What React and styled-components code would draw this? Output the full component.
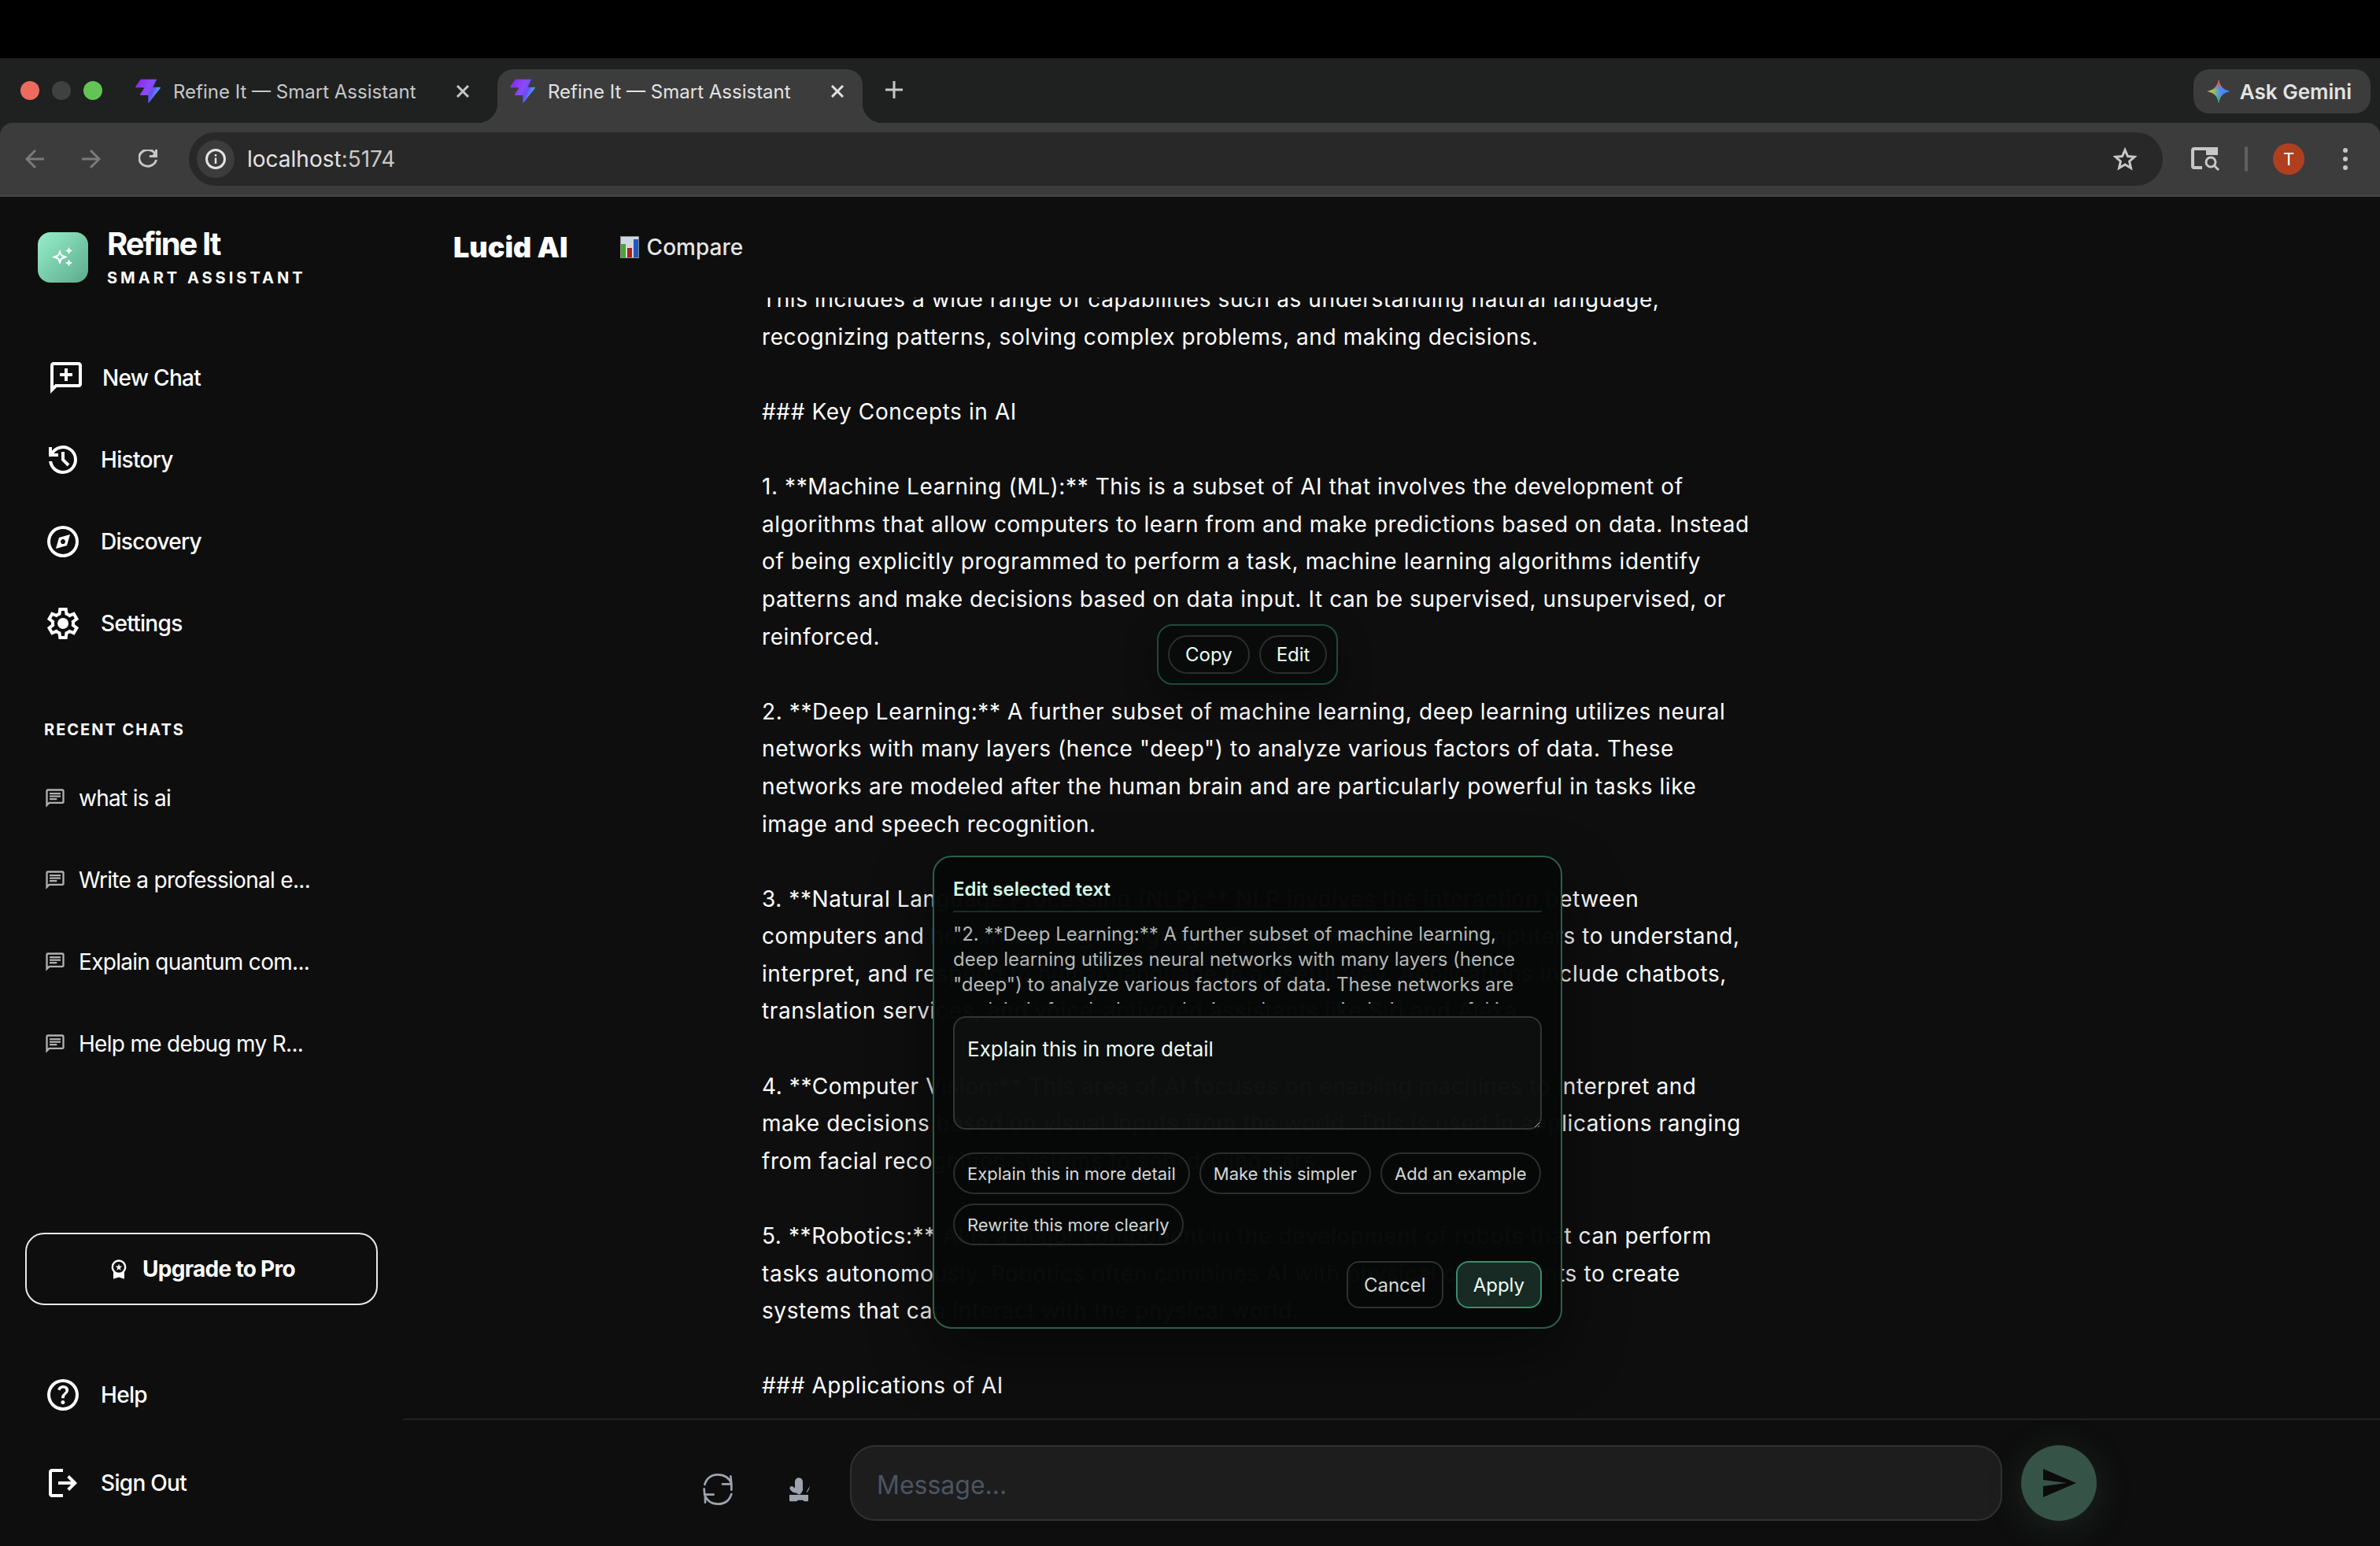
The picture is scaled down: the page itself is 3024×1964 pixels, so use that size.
import React, { useState } from "react";
import styled, { createGlobalStyle, css } from "styled-components";

const answer = `This includes a wide range of capabilities such as understanding natural language, recognizing patterns, solving complex problems, and making decisions.

### Key Concepts in AI

1. **Machine Learning (ML):** This is a subset of AI that involves the development of algorithms that allow computers to learn from and make predictions based on data. Instead of being explicitly programmed to perform a task, machine learning algorithms identify patterns and make decisions based on data input. It can be supervised, unsupervised, or reinforced.

2. **Deep Learning:** A further subset of machine learning, deep learning utilizes neural networks with many layers (hence "deep") to analyze various factors of data. These networks are modeled after the human brain and are particularly powerful in tasks like image and speech recognition.

3. **Natural Language Processing (NLP):** NLP involves the interaction between computers and humans through language. The goal is to enable computers to understand, interpret, and respond to human language in a useful way. Applications include chatbots, translation services, and voice-activated assistants like Siri and Alexa.

4. **Computer Vision:** This area of AI focuses on enabling machines to interpret and make decisions based on visual inputs from the world. This is used in applications ranging from facial recognition systems to self-driving cars.

5. **Robotics:** AI is a major component in the development of robots that can perform tasks autonomously. Robotics often combines AI with physical components to create systems that can interact with the physical world.

### Applications of AI`;

const selected = `"2. **Deep Learning:** A further subset of machine learning, deep learning utilizes neural networks with many layers (hence "deep") to analyze various factors of data. These networks are modeled after the human brain and are particularly powerful in tasks like image and speech recognition."`;

const recentChats = ["what is ai", "Write a professional e...", "Explain quantum com...", "Help me debug my R..."];

const suggestions = [
  "Explain this in more detail",
  "Make this simpler",
  "Add an example",
  "Rewrite this more clearly",
];

const ring =
  "M480-80q-83 0-156-31.5T197-197q-54-54-85.5-127T80-480q0-83 31.5-156T197-763q54-54 127-85.5T480-880q83 0 156 31.5T763-763q54 54 85.5 127T880-480q0 83-31.5 156T763-197q-54 54-127 85.5T480-80Zm0-80q134 0 227-93t93-227q0-134-93-227t-227-93q-134 0-227 93t-93 227q0 134 93 227t227 93Z";
const bubble =
  "M80-80v-720q0-33 23.5-56.5T160-880h640q33 0 56.5 23.5T880-800v480q0 33-23.5 56.5T800-240H240L80-80Zm126-240h594v-480H160v525l46-45Z";

const symbols = {
  newChat: bubble + "M440-400h80v-120h120v-80H520v-120h-80v120H320v80h120v120Z",
  history:
    "M480-120q-138 0-240.5-91.5T122-440h82q14 104 92.5 172T480-200q117 0 198.5-81.5T760-480q0-117-81.5-198.5T480-760q-69 0-129 32t-101 88h110v80H120v-240h80v94q51-64 124.5-99T480-840q75 0 140.5 28.5t114 77q48.5 48.5 77 114T840-480q0 75-28.5 140.5t-77 114q-48.5 48.5-114 77T480-120Zm112-192L440-464v-216h80v184l128 128-56 56Z",
  discovery:
    ring +
    "m-180-140 280-80 80-280-280 80-80 280Zm180-120q-25 0-42.5-17.5T420-480q0-25 17.5-42.5T480-540q25 0 42.5 17.5T540-480q0 25-17.5 42.5T480-420Z",
  settings:
    "m370-80-16-128q-13-5-24.5-12T307-235l-119 50L78-375l103-78q-1-7-1-13.5v-27q0-6.5 1-13.5L78-585l110-190 119 50q11-8 23-15t24-12l16-128h220l16 128q13 5 24.5 12t22.5 15l119-50 110 190-103 78q1 7 1 13.5v27q0 6.5-2 13.5l103 78-110 190-118-50q-11 8-23 15t-24 12L590-80H370Zm70-80h79l14-106q31-8 57.5-23.5T639-327l99 41 39-68-86-65q5-14 7-29.5t2-31.5q0-16-2-31.5t-7-29.5l86-65-39-68-99 42q-22-23-48.5-38.5T533-694l-13-106h-79l-14 106q-31 8-57.5 23.5T321-633l-99-41-39 68 86 64q-5 15-7 30t-2 32q0 16 2 31t7 30l-86 65 39 68 99-42q22 23 48.5 38.5T427-266l13 106Zm42-180q58 0 99-41t41-99q0-58-41-99t-99-41q-59 0-99.5 41T342-480q0 58 40.5 99t99.5 41Z",
  help:
    ring +
    "M478-240q21 0 35.5-14.5T528-290q0-21-14.5-35.5T478-340q-21 0-35.5 14.5T428-290q0 21 14.5 35.5T478-240Zm-36-154h74q0-33 7.5-52t42.5-52q26-26 41-49.5t15-56.5q0-56-41-86t-97-30q-57 0-92.5 30T342-618l66 26q5-18 22.5-39t53.5-21q32 0 48 17.5t16 38.5q0 20-12 37.5T506-526q-44 39-54 59t-10 73Z",
  signOut:
    "M200-120q-33 0-56.5-23.5T120-200v-560q0-33 23.5-56.5T200-840h280v80H200v560h280v80H200Zm440-160-55-58 102-102H360v-80h327L585-622l55-58 200 200-200 200Z",
  chat: bubble + "M240-400h320v-80H240v80Zm0-120h480v-80H240v80Zm0-120h480v-80H240v80Z",
  premium:
    "m387-412 35-114-92-74h114l36-112 36 112h114l-93 74 35 114-92-71-93 71ZM240-40v-309q-38-42-59-96t-21-115q0-134 93-227t227-93q134 0 227 93t93 227q0 61-21 115t-59 96v309l-240-80-240 80Zm240-280q100 0 170-70t70-170q0-100-70-170t-170-70q-100 0-170 70t-70 170q0 100 70 170t170 70Z",
};

function Symbol({ name, size = 48 }) {
  return (
    <svg width={size} height={size} viewBox="0 -960 960 960" fill="currentColor" aria-hidden="true">
      <path d={symbols[name]} />
    </svg>
  );
}

function Favicon({ id }) {
  return (
    <svg width="32" height="32" viewBox="0 0 96 96" aria-hidden="true">
      <defs>
        <linearGradient id={id} x1="0.1" y1="0.2" x2="0.9" y2="0.55">
          <stop offset="0" stopColor="#8a2cf0" />
          <stop offset="0.5" stopColor="#8b4bfa" />
          <stop offset="0.75" stopColor="#6a4cf8" />
          <stop offset="1" stopColor="#4aa4ff" />
        </linearGradient>
      </defs>
      <path
        d="M22 2H82L67 32H94Q97 33 95 36L52 91Q49 94 49 90V63H20Q16 62 19 58L33 37Q33 34 30 34H3Q-1 33 1 30L18 5Q20 2 22 2Z"
        fill={`url(#${id})`}
      />
    </svg>
  );
}

function Close() {
  return (
    <svg width="16" height="16" viewBox="0 0 16 16" stroke="currentColor" strokeWidth="3" aria-hidden="true">
      <path d="M1 1L15 15M15 1L1 15" />
    </svg>
  );
}

function BrowserBar() {
  return (
    <header>
      <TabStrip>
        <Lights>
          <Light $color="#ed6a5f" />
          <Light $color="#3f4140" />
          <Light $color="#61c454" />
        </Lights>
        <Tab>
          <Favicon id="boltA" />
          <TabTitle>Refine It — Smart Assistant</TabTitle>
          <TabButton aria-label="Close tab"><Close /></TabButton>
        </Tab>
        <Tab $active>
          <Favicon id="boltB" />
          <TabTitle>Refine It — Smart Assistant</TabTitle>
          <TabButton aria-label="Close tab"><Close /></TabButton>
        </Tab>
        <NewTab aria-label="New tab">
          <svg width="22" height="22" viewBox="0 0 22 22" stroke="currentColor" strokeWidth="3">
            <path d="M11 0V22M0 11H22" />
          </svg>
        </NewTab>
        <Gemini>
          <svg width="30" height="30" viewBox="0 0 30 30" aria-hidden="true">
            <defs>
              <linearGradient id="gemA" x1="0" y1="0.5" x2="0.6" y2="0.5">
                <stop offset="0" stopColor="#fbc02d" />
                <stop offset="0.5" stopColor="#8fbf6a" />
                <stop offset="1" stopColor="#4a86ff" />
              </linearGradient>
              <linearGradient id="gemB" x1="0.5" y1="0" x2="0.5" y2="1">
                <stop offset="0" stopColor="#f04a45" />
                <stop offset="0.22" stopColor="#e0605a" />
                <stop offset="0.45" stopColor="#4a86ff" stopOpacity="0" />
                <stop offset="0.65" stopColor="#34a87a" stopOpacity="0" />
                <stop offset="0.85" stopColor="#3fb56a" />
              </linearGradient>
            </defs>
            <path d="M15 0Q17 13 30 15Q17 17 15 30Q13 17 0 15Q13 13 15 0Z" fill="url(#gemA)" />
            <path d="M15 0Q17 13 30 15Q17 17 15 30Q13 17 0 15Q13 13 15 0Z" fill="url(#gemB)" />
          </svg>
          Ask Gemini
        </Gemini>
      </TabStrip>
      <ToolbarBack>
        <Toolbar>
          <NavButtons>
            <ChromeButton $dim aria-label="Back">
              <svg width="24" height="24" viewBox="0 0 24 24" fill="none" stroke="currentColor" strokeWidth="3">
                <path d="M24 12H2M13 1L2 12L13 23" />
              </svg>
            </ChromeButton>
            <ChromeButton $dim aria-label="Forward">
              <svg width="24" height="24" viewBox="0 0 24 24" fill="none" stroke="currentColor" strokeWidth="3">
                <path d="M0 12H22M11 1L22 12L11 23" />
              </svg>
            </ChromeButton>
            <ChromeButton aria-label="Reload">
              <svg width="24" height="24" viewBox="0 0 24 24" fill="none" stroke="currentColor" strokeWidth="3">
                <path d="M21 5A11 10.5 0 1 0 22.5 13" />
                <path d="M22.5 0V8.5H14" />
                <path d="M17 8L22 3V8Z" fill="currentColor" strokeWidth="1" />
              </svg>
            </ChromeButton>
          </NavButtons>
          <Omnibox>
            <SiteInfo aria-label="Site information">
              <svg width="26" height="26" viewBox="0 0 26 26" fill="none" stroke="currentColor" strokeWidth="3">
                <circle cx="13" cy="13" r="11.5" />
                <path d="M13 11.5V19M13 7V9.5" strokeWidth="2.5" />
              </svg>
            </SiteInfo>
            <Address>localhost<span>:5174</span></Address>
            <ChromeButton aria-label="Bookmark">
              <svg width="30" height="30" viewBox="0 0 30 30" fill="none" stroke="currentColor" strokeWidth="3">
                <path d="M15 3.5L18.5 11.5L27 12.3L20.6 18L22.5 26.5L15 22L7.5 26.5L9.4 18L3 12.3L11.5 11.5Z" />
              </svg>
            </ChromeButton>
          </Omnibox>
          <ToolbarEnd>
            <ChromeButton aria-label="Search tabs">
              <svg width="36" height="30" viewBox="0 0 36 30" fill="none" stroke="currentColor" strokeWidth="4">
                <path d="M14 26H4Q2 26 2 24V4Q2 2 4 2H32V8H19" />
                <path d="M19 2H32Q34 2 34 4V10H19Z" fill="currentColor" stroke="none" />
                <circle cx="25" cy="19" r="6" strokeWidth="3" />
                <path d="M29 23L35 29" strokeWidth="3" />
              </svg>
            </ChromeButton>
            <Divider />
            <Avatar>T</Avatar>
            <ChromeButton aria-label="Menu">
              <svg width="6" height="28" viewBox="0 0 6 28" fill="currentColor">
                <circle cx="3" cy="3" r="3" />
                <circle cx="3" cy="14" r="3" />
                <circle cx="3" cy="25" r="3" />
              </svg>
            </ChromeButton>
          </ToolbarEnd>
        </Toolbar>
      </ToolbarBack>
    </header>
  );
}

function Sidebar() {
  return (
    <Side>
      <Brand>
        <Logo>
          <svg width="28" height="28" viewBox="0 0 28 28" fill="#fff" aria-hidden="true">
            <path
              fillRule="evenodd"
              d="M10 4L12.6 10.4L20 13.5L12.6 16.6L10 23L7.4 16.6L0 13.5L7.4 10.4ZM10 9.5L8.7 12.2L6 13.5L8.7 14.8L10 17.5L11.3 14.8L14 13.5L11.3 12.2Z"
            />
            <path d="M21.5 1L22.9 4.1L26 5.5L22.9 6.9L21.5 10L20.1 6.9L17 5.5L20.1 4.1Z" />
            <path d="M21.5 16.5L22.9 19.6L26 21L22.9 22.4L21.5 25.5L20.1 22.4L17 21L20.1 19.6Z" />
          </svg>
        </Logo>
        <div>
          <BrandName>Refine It</BrandName>
          <BrandTag>SMART ASSISTANT</BrandTag>
        </div>
      </Brand>
      <Nav>
        <NavItem $primary><Symbol name="newChat" />New Chat</NavItem>
        <NavItem><Symbol name="history" />History</NavItem>
        <NavItem><Symbol name="discovery" />Discovery</NavItem>
        <NavItem><Symbol name="settings" />Settings</NavItem>
      </Nav>
      <SectionTitle>RECENT CHATS</SectionTitle>
      <Nav>
        {recentChats.map((chat) => (
          <ChatItem key={chat}>
            <Symbol name="chat" size={28} />
            <span>{chat}</span>
          </ChatItem>
        ))}
      </Nav>
      <SideFooter>
        <Upgrade><Symbol name="premium" size={28} />Upgrade to Pro</Upgrade>
        <Account>
          <NavItem><Symbol name="help" />Help</NavItem>
          <NavItem><Symbol name="signOut" />Sign Out</NavItem>
        </Account>
      </SideFooter>
    </Side>
  );
}

function EditDialog() {
  const [prompt, setPrompt] = useState(suggestions[0]);

  return (
    <Dialog role="dialog" aria-labelledby="edit-title">
      <DialogTitle id="edit-title">Edit selected text</DialogTitle>
      <Preview>{selected}</Preview>
      <Prompt aria-label="Instruction" value={prompt} onChange={(e) => setPrompt(e.target.value)} />
      <Chips>
        {suggestions.map((text) => (
          <Chip key={text} onClick={() => setPrompt(text)}>{text}</Chip>
        ))}
      </Chips>
      <Actions>
        <ActionButton>Cancel</ActionButton>
        <ActionButton $primary>Apply</ActionButton>
      </Actions>
    </Dialog>
  );
}

function Composer() {
  return (
    <ComposerBar>
      <ComposerRow>
        <ToolButton aria-label="Regenerate">
          <svg width="40" height="40" viewBox="66 156 120 120" fill="none" stroke="currentColor" strokeWidth="8" strokeLinecap="round">
            <path d="M76 198C84 172 104 160 126 160C150 160 169 172 178 194V218M175 166L178 196H144" />
            <path d="M178 234C170 260 150 272 126 272C103 272 86 262 76 238L74 214M78 266V236H110" />
          </svg>
        </ToolButton>
        <ToolButton aria-label="Voice input">
          <svg width="30" height="33" viewBox="396 167 90 99" fill="currentColor">
            <rect x="423" y="171" width="30" height="60" rx="15" />
            <path d="M403 212A8 8 0 0 1 417 206L430 216V230Q410 228 403 212Z" />
            <path d="M428 229H450L438 235Z" />
            <path d="M480 202L467 225L470 226Q478 216 480 202Z" />
            <path d="M402 236H474V257Q474 261 470 261H460Q456 261 454 256H434Q432 261 428 261H406Q402 261 402 257Z" />
          </svg>
        </ToolButton>
        <MessageInput placeholder="Message..." aria-label="Message" />
        <Send aria-label="Send">
          <svg width="48" height="48" viewBox="0 0 24 24" fill="currentColor">
            <path d="M2.01 21L23 12 2.01 3 2 10l15 2-15 2z" />
          </svg>
        </Send>
      </ComposerRow>
    </ComposerBar>
  );
}

function App() {
  return (
    <>
      <GlobalStyle />
      <Screen>
        <BrowserBar />
        <Body>
          <Sidebar />
          <Main>
            <TopBar>
              <h1>Lucid AI</h1>
              <Compare href="#compare">
                <svg width="24" height="28" viewBox="0 0 24 28" aria-hidden="true">
                  <path d="M0 0H24V28H0Z" fill="#8b9096" />
                  <path d="M1 1H23V27H1Z" fill="#cfd8e2" />
                  <path d="M1 10H7V27H1Z" fill="#4aa52e" />
                  <path d="M9 15H15V27H9Z" fill="#a8231a" />
                  <path d="M17 4H23V27H17Z" fill="#2456b8" />
                </svg>
                Compare
              </Compare>
            </TopBar>
            <Messages>
              <Thread>
                <Message>{answer}</Message>
              </Thread>
              <SelectionMenu>
                <MenuButton>Copy</MenuButton>
                <MenuButton>Edit</MenuButton>
              </SelectionMenu>
              <EditDialog />
            </Messages>
            <Composer />
          </Main>
        </Body>
      </Screen>
    </>
  );
}

export default App;

const GlobalStyle = createGlobalStyle`
  * {
    box-sizing: border-box;
    margin: 0;
    padding: 0;
  }
  body {
    background: #000;
    color: #fff;
    font-family: Inter, "Liberation Sans", sans-serif;
  }
  button {
    border: none;
    background: none;
    color: inherit;
    font: inherit;
    cursor: pointer;
  }
  svg {
    display: block;
    flex-shrink: 0;
  }
`;

const Screen = styled.div`
  display: flex;
  flex-direction: column;
  height: 100vh;
  padding-top: 74px;
`;

/* browser */

const TabStrip = styled.div`
  display: flex;
  align-items: flex-end;
  height: 82px;
  padding: 0 12px 0 26px;
  background: #1f2120;
`;

const Lights = styled.div`
  display: flex;
  gap: 16px;
  padding: 0 26px 29px 0;
`;

const Light = styled.span`
  width: 24px;
  height: 24px;
  border-radius: 50%;
  background: ${({ $color }) => $color};
`;

const Tab = styled.div`
  position: relative;
  display: flex;
  align-items: center;
  gap: 16px;
  width: 464px;
  height: 68px;
  margin-right: 12px;
  padding: 0 16px 12px;
  color: #c7c7c7;
  ${({ $active }) =>
    $active &&
    css`
      border-radius: 20px 20px 0 0;
      background: #3c3c3c;
      color: #e3e3e3;
      /* flared feet of the active tab */
      &::before,
      &::after {
        content: "";
        position: absolute;
        bottom: 0;
        width: 24px;
        height: 24px;
      }
      &::before {
        right: 100%;
        background: radial-gradient(circle at 0 0, transparent 24px, #3c3c3c 24px);
      }
      &::after {
        left: 100%;
        background: radial-gradient(circle at 100% 0, transparent 24px, #3c3c3c 24px);
      }
    `}
`;

const TabTitle = styled.span`
  flex: 1;
  font-size: 24px;
  white-space: nowrap;
`;

const TabButton = styled.button`
  padding: 8px;
`;

const NewTab = styled.button`
  margin: 0 auto 31px 17px;
  color: #c7c7c7;
`;

const Gemini = styled.button`
  display: flex;
  align-items: center;
  gap: 12px;
  height: 56px;
  margin-bottom: 12px;
  padding: 0 24px 0 17px;
  border-radius: 20px;
  background: #3c3c3c;
  color: #e3e3e3;
  font-size: 26px;
  font-weight: 600;
`;

const ToolbarBack = styled.div`
  background: #1f2120;
`;

const Toolbar = styled.div`
  display: flex;
  align-items: center;
  height: 94px;
  padding: 0 41px 0 32px;
  border-bottom: 2px solid #464646;
  border-radius: 16px 16px 0 0;
  background: #3c3c3c;
`;

const NavButtons = styled.div`
  display: flex;
  gap: 48px;
  margin-right: 40px;
`;

const ChromeButton = styled.button`
  color: ${({ $dim }) => ($dim ? "#7b7b7b" : "#c7c7c7")};
`;

const Omnibox = styled.div`
  display: flex;
  flex: 1;
  align-items: center;
  gap: 16px;
  height: 68px;
  padding: 0 33px 0 10px;
  border-radius: 34px;
  background: #282828;
`;

const SiteInfo = styled.button`
  display: grid;
  place-items: center;
  width: 48px;
  height: 48px;
  border-radius: 50%;
  background: #3c3c3c;
  color: #e3e3e3;
`;

const Address = styled.span`
  flex: 1;
  color: #e3e3e3;
  font-size: 28px;
  span {
    color: #c7c7c7;
  }
`;

const ToolbarEnd = styled.div`
  display: flex;
  align-items: center;
  gap: 32px;
  padding-left: 36px;
`;

const Divider = styled.span`
  width: 4px;
  height: 32px;
  border-radius: 2px;
  background: #5f5f5f;
`;

const Avatar = styled.span`
  display: grid;
  place-items: center;
  width: 40px;
  height: 40px;
  margin-right: 17px;
  border-radius: 50%;
  background: #b03f20;
  font-size: 22px;
`;

/* app */

const Body = styled.div`
  display: flex;
  flex: 1;
  min-height: 0;
  background: #0e0e0e;
`;

const Side = styled.aside`
  display: flex;
  flex-direction: column;
  width: 512px;
  padding: 34px 32px 36px;
`;

const Brand = styled.div`
  display: flex;
  align-items: center;
  gap: 24px;
  margin-bottom: 66px;
  padding-left: 16px;
`;

const Logo = styled.div`
  display: grid;
  place-items: center;
  width: 64px;
  height: 64px;
  border-radius: 16px;
  background: linear-gradient(135deg, #97eec9, #5bab8d);
`;

const BrandName = styled.div`
  font-size: 40px;
  font-weight: 700;
  line-height: 52px;
  letter-spacing: -2px;
`;

const BrandTag = styled.div`
  font-size: 20px;
  font-weight: 700;
  line-height: 34px;
  letter-spacing: 4px;
`;

const Nav = styled.nav`
  display: flex;
  flex-direction: column;
  gap: 16px;
`;

const NavItem = styled.button`
  display: flex;
  align-items: center;
  gap: ${({ $primary }) => ($primary ? "22px" : "24px")};
  height: 88px;
  padding: 0 ${({ $primary }) => ($primary ? "28px" : "24px")};
  font-size: 28px;
  font-weight: 500;
  letter-spacing: -0.025em;
`;

const SectionTitle = styled.h2`
  margin: 76px 0 28px;
  padding-left: 24px;
  font-size: 20px;
  font-weight: 700;
  line-height: 30px;
  letter-spacing: 2px;
`;

const ChatItem = styled.button`
  display: flex;
  align-items: center;
  gap: 16px;
  height: 88px;
  padding: 0 24px;
  font-size: 28px;
  letter-spacing: -0.025em;
  svg {
    color: #b0b0b0;
  }
`;

const SideFooter = styled.div`
  margin-top: auto;
`;

const Upgrade = styled.button`
  display: flex;
  align-items: center;
  justify-content: center;
  gap: 16px;
  width: 100%;
  height: 92px;
  border: 2px solid #e8e8e8;
  border-radius: 24px;
  font-size: 28px;
  font-weight: 700;
  letter-spacing: -0.025em;
`;

const Account = styled.div`
  display: flex;
  flex-direction: column;
  gap: 24px;
  margin-top: 70px;
`;

const Main = styled.main`
  display: flex;
  flex: 1;
  flex-direction: column;
  min-width: 0;
`;

const TopBar = styled.div`
  display: flex;
  align-items: center;
  gap: 66px;
  height: 128px;
  padding: 0 64px;
  h1 {
    font-size: 36px;
    font-weight: 900;
  }
`;

const Compare = styled.a`
  display: flex;
  align-items: center;
  gap: 10px;
  color: #e5e5e5;
  font-size: 28px;
  font-weight: 500;
  text-decoration: none;
`;

const Messages = styled.div`
  position: relative;
  display: flex;
  flex: 1;
  flex-direction: column;
  justify-content: flex-end;
  min-height: 0;
  overflow: hidden;
`;

const Thread = styled.div`
  width: 100%;
  max-width: 1600px;
  margin: 0 auto;
  padding-bottom: 17px;
`;

const Message = styled.p`
  max-width: 79%;
  font-size: 28px;
  line-height: 1.7;
  letter-spacing: 0.021em;
  white-space: pre-wrap;
`;

/* floats over the selected passage */
const SelectionMenu = styled.div`
  position: absolute;
  top: 415px;
  left: 958px;
  display: flex;
  gap: 12px;
  padding: 12px;
  border: 2px solid #1f4a38;
  border-radius: 20px;
  background: rgba(8, 11, 10, 0.96);
  box-shadow: 0 16px 40px rgba(0, 0, 0, 0.35);
`;

const MenuButton = styled.button`
  height: 49px;
  padding: 0 20px;
  border: 2px solid #2c2e2d;
  border-radius: 25px;
  color: #ecfdf5;
  font-size: 24px;
`;

const Dialog = styled.div`
  position: absolute;
  top: 709px;
  left: 673px;
  width: 800px;
  padding: 24px;
  border: 2px solid #2a6049;
  border-radius: 24px;
  background: rgba(5, 8, 7, 0.985);
  box-shadow: 0 32px 80px rgba(0, 0, 0, 0.45);
`;

const DialogTitle = styled.h2`
  margin-bottom: 12px;
  padding-bottom: 10px;
  border-bottom: 2px solid #1a2e28;
  color: #d1fae5;
  font-size: 24px;
  font-weight: 600;
  line-height: 34px;
`;

const Preview = styled.p`
  max-height: 104px;
  margin-bottom: 16px;
  overflow: hidden;
  color: #b4b8b6;
  font-size: 24px;
  line-height: 32px;
`;

const Prompt = styled.textarea`
  display: block;
  width: 100%;
  height: 144px;
  padding: 18px 16px;
  border: 2px solid #333534;
  border-radius: 16px;
  outline: none;
  background: rgba(255, 255, 255, 0.03);
  color: #ecfdf5;
  color-scheme: dark;
  font: 26px/44px Inter, "Liberation Sans", sans-serif;
`;

const Chips = styled.div`
  display: flex;
  flex-wrap: wrap;
  gap: 12px;
  margin: 29px 0 20px;
`;

const Chip = styled.button`
  height: 53px;
  padding: 0 16px;
  border: 2px solid #2c2e2d;
  border-radius: 27px;
  color: #d4d8d6;
  font-size: 22px;
`;

const Actions = styled.div`
  display: flex;
  justify-content: flex-end;
  gap: 16px;
`;

const ActionButton = styled.button`
  height: 60px;
  padding: 0 20px;
  border: 2px solid ${({ $primary }) => ($primary ? "#3b8b6b" : "#2e302f")};
  border-radius: 16px;
  background: ${({ $primary }) => ($primary ? "#172a23" : "transparent")};
  color: ${({ $primary }) => ($primary ? "#ecfdf5" : "#d4d8d6")};
  font-size: 24px;
`;

const ComposerBar = styled.footer`
  padding: 32px 64px;
  border-top: 2px solid #222;
`;

const ComposerRow = styled.div`
  display: flex;
  align-items: flex-end;
  gap: 24px;
  max-width: 1792px;
  margin: 0 auto;
`;

const ToolButton = styled.button`
  display: grid;
  place-items: center;
  width: 80px;
  height: 80px;
  color: #9ca3af;
`;

const MessageInput = styled.input`
  flex: 1;
  min-width: 0;
  height: 96px;
  padding: 4px 32px 0;
  border: 2px solid #303030;
  border-radius: 32px;
  outline: none;
  background: #1d1d1d;
  color: #fff;
  font: 32px Inter, "Liberation Sans", sans-serif;
  &::placeholder {
    color: #4b5563;
  }
`;

const Send = styled.button`
  display: grid;
  place-items: center;
  width: 96px;
  height: 96px;
  border-radius: 50%;
  background: #365348;
  box-shadow: 0 8px 40px rgba(54, 83, 72, 0.35);
  color: #0b0b0b;
`;
